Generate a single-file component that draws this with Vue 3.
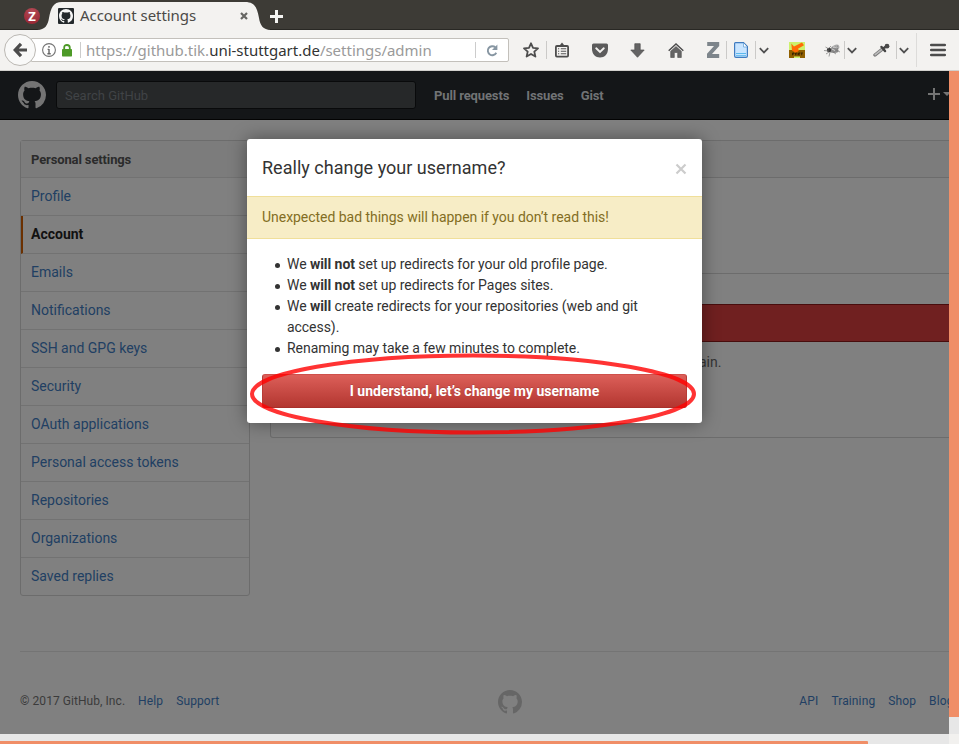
<script setup>
const mark = 'M8 0C3.58 0 0 3.58 0 8c0 3.54 2.29 6.53 5.47 7.59.4.07.55-.17.55-.38 0-.19-.01-.82-.01-1.49-2.01.37-2.53-.49-2.69-.94-.09-.23-.48-.94-.82-1.13-.28-.15-.68-.52-.01-.53.63-.01 1.08.58 1.23.82.72 1.21 1.87.87 2.33.66.07-.52.28-.87.51-1.07-1.78-.2-3.64-.89-3.64-3.95 0-.87.31-1.59.82-2.15-.08-.2-.36-1.02.08-2.12 0 0 .67-.21 2.2.82.64-.18 1.32-.27 2-.27.68 0 1.36.09 2 .27 1.53-1.04 2.2-.82 2.2-.82.44 1.1.16 1.92.08 2.12.51.56.82 1.27.82 2.15 0 3.07-1.87 3.75-3.65 3.95.29.25.54.73.54 1.48 0 1.07-.01 1.93-.01 2.2 0 .21.15.46.55.38A8.013 8.013 0 0016 8c0-4.42-3.58-8-8-8z'
const items = ['Profile', 'Account', 'Emails', 'Notifications', 'SSH and GPG keys', 'Security', 'OAuth applications', 'Personal access tokens', 'Repositories', 'Organizations', 'Saved replies']
</script>

<template>
  <div class="window">
    <div class="tabbar">
      <span class="pinned">Z</span>
      <div class="tab">
        <svg class="tab-bg" width="234" height="30" viewBox="0 0 234 30">
          <path d="M0 30C8 30 11 25 12 18C14 8 16 2 25 2H208C218 2 220 8 222 18C223 25 226 30 234 30Z" fill="#f3f2f0" />
        </svg>
        <div class="tab-content">
          <span class="favicon"><svg width="14" height="14" viewBox="0 0 16 16"><path :d="mark" fill="#f5f5f5" /></svg></span>
          <span class="tab-title">Account settings</span>
          <svg class="tab-close" width="8" height="8" viewBox="0 0 8 8"><path d="M1 1L7 7M7 1L1 7" stroke="#666663" stroke-width="2.2" /></svg>
        </div>
      </div>
      <svg class="new-tab" width="13" height="13" viewBox="0 0 13 13"><path d="M6.5 0V13M0 6.5H13" stroke="#f4f4f2" stroke-width="3" /></svg>
    </div>

    <div class="toolbar">
      <span class="back"><svg width="14" height="16" viewBox="0 0 14 16"><path d="M8 1.8L2.2 8L8 14.2M2.4 8H14" fill="none" stroke="#4c4c4c" stroke-width="3.2" /></svg></span>
      <div class="urlbar">
        <svg class="info" width="14" height="14" viewBox="0 0 14 14"><circle cx="7" cy="7" r="6.4" fill="none" stroke="#737373" stroke-width="1.1" /><path d="M7 3V4.7M7 6V11M5.6 6.4H7M5.4 10.7H8.7" stroke="#666" stroke-width="1.4" /></svg>
        <svg class="lock" width="10" height="13" viewBox="0 0 10 13"><path d="M2.2 6V3.7Q2.2 1 5 1T7.8 3.7V6" fill="none" stroke="#4d9a27" stroke-width="1.8" /><rect y="5" width="10" height="7.5" rx=".7" fill="#4d9a27" /></svg>
        <i class="url-sep"></i>
        <span class="url">https://github.tik.<b>uni-stuttgart.de</b>/settings/admin</span>
        <i class="reload-sep"></i>
        <svg class="reload" width="12" height="13" viewBox="0 0 12 13"><path d="M9.4 3.4A4.5 4.5 0 1 0 10.3 8.8" fill="none" stroke="#8796a2" stroke-width="1.9" /><path d="M11.4.6V6H6Z" fill="#8796a2" /></svg>
      </div>
      <svg class="i-star" width="16" height="16" viewBox="0 0 16 16"><path d="M8 1.3L10 5.8L15 6.3L11.3 9.6L12.4 14.6L8 12L3.6 14.6L4.7 9.6L1 6.3L6 5.8Z" fill="none" stroke="#4d4d4d" stroke-width="1.8" stroke-linejoin="round" /></svg>
      <i class="vsep s1"></i>
      <svg class="i-list" width="14" height="16" viewBox="0 0 14 16"><rect x=".9" y="4" width="12.2" height="10.6" rx="1" fill="#f3f2f0" stroke="#4d4d4d" stroke-width="1.8" /><path d="M3.5 4.5V3H5L7 .5L9 3H10.5V4.5Z" fill="#4d4d4d" /><path d="M3 6.8H4.2M5.8 6.8H11.2M3 9.3H4.2M5.8 9.3H11.2M3 11.8H4.2M5.8 11.8H11.2" stroke="#555" stroke-width="1.1" /></svg>
      <svg class="i-pocket" width="16" height="15" viewBox="0 0 16 15"><path d="M1.5 .5H14.5Q16 .5 16 2V6C16 11 12.5 14.5 8 14.5S0 11 0 6V2Q0 .5 1.5 .5Z" fill="#5c5c5c" /><path d="M4.2 5.3L8 9L11.8 5.3" fill="none" stroke="#f3f2f0" stroke-width="1.9" stroke-linecap="round" /></svg>
      <svg class="i-down" width="15" height="15" viewBox="0 0 15 15"><path d="M4.8 .7H10.2V7H14.2L7.5 14.3L.8 7H4.8Z" fill="#646464" stroke="#4d4d4d" stroke-width=".7" /></svg>
      <svg class="i-home" width="16" height="15" viewBox="0 0 16 15"><path d="M.7 7.7L8 1L15.3 7.7" fill="none" stroke="#4d4d4d" stroke-width="1.5" /><path d="M2.7 8.3L8 3.5L13.3 8.3V14.5H9.7V9.5H6.3V14.5H2.7Z" fill="#656565" stroke="#4d4d4d" stroke-width=".6" /></svg>
      <svg class="i-z" width="14" height="16" viewBox="0 0 14 16"><path d="M1.2 0H13.2V4L6 12H13.2V16H1V11.7L8 4H1.2Z" fill="#7d858b" /></svg>
      <i class="vsep s2"></i>
      <svg class="i-doc" width="14" height="16" viewBox="0 0 14 16"><path d="M1.5 .6H9.5L13.4 4.5V14Q13.4 15.4 12 15.4H2Q.6 15.4 .6 14V1.5Q.6 .6 1.5 .6Z" fill="#c9e5ff" stroke="#407cc0" stroke-width="1.2" /><path d="M9.5 1V5H13" fill="#fff" stroke="#69a7dc" stroke-width=".8" /><path d="M2 11.5H12M2 13.7H12" stroke="#5bb9ed" stroke-width="1" /></svg>
      <i class="vsep s3"></i>
      <svg class="chev c1" width="10" height="7" viewBox="0 0 10 7"><path d="M.8 1.2L5 5.4L9.2 1.2" fill="none" stroke="#505050" stroke-width="1.8" /></svg>
      <svg class="i-part" width="16" height="16" viewBox="0 0 16 16"><rect width="16" height="16" fill="#cdf16c" /><path d="M0 8H16V16H11V14.5H5V16H0Z" fill="#906000" /><path d="M2.3 1.5L5 4.5L13 .5L15 3.2L9 6.8L10 8.5L7 11L3 8.5Z" fill="#ff6b05" /><path d="M3.5 13.3V11H5V12H3.5M6.5 13.3V11H8V13.3M9.5 13.3V11H11L9.5 12L11 13.3M11.5 11H14M12.7 11V13.3" fill="none" stroke="#382300" stroke-width=".9" /></svg>
      <svg class="i-fly" width="17" height="15" viewBox="0 0 17 15"><ellipse cx="11" cy="5" rx="4.6" ry="2.8" transform="rotate(-25 11 5)" fill="#aaa" /><ellipse cx="10" cy="7.4" rx="4.5" ry="2.5" fill="#888" /><circle cx="5" cy="7" r="2.2" fill="#3c3c3c" /><path d="M5 6L1.5 4M5 8L0 7.5M5 9L2 11M6 9L5 13.5M9 9L12 11M12 7L16 9M5 5L7 3M11 3L14 6M8 5L14 3" fill="none" stroke="#777" stroke-width=".7" /><path d="M8 6L11 7.5M9 4.3L13 4" stroke="#ddd" stroke-width=".9" /></svg>
      <i class="vsep s4"></i>
      <svg class="chev c2" width="10" height="7" viewBox="0 0 10 7"><path d="M.8 1.2L5 5.4L9.2 1.2" fill="none" stroke="#505050" stroke-width="1.8" /></svg>
      <svg class="i-pick" width="17" height="15" viewBox="0 0 17 15"><path d="M2 12L9.5 6" stroke="#777" stroke-width="3.4" stroke-linecap="round" /><path d="M2.2 11.7L9.5 6" stroke="#bbb" stroke-width="1.6" stroke-linecap="round" /><path d="M8.5 4L12 8M10.5 5.3L14 3" stroke="#444" stroke-width="2.5" stroke-linecap="round" /><circle cx="14" cy="3.2" r="2.4" fill="#4a4a4a" /></svg>
      <i class="vsep s5"></i>
      <svg class="chev c3" width="10" height="7" viewBox="0 0 10 7"><path d="M.8 1.2L5 5.4L9.2 1.2" fill="none" stroke="#505050" stroke-width="1.8" /></svg>
      <i class="vsep s6"></i>
      <svg class="i-menu" width="16" height="14" viewBox="0 0 16 14"><path d="M1.2 2H14.8M1.2 7H14.8M1.2 12H14.8" stroke="#4c4c4c" stroke-width="2.6" stroke-linecap="round" /></svg>
    </div>

    <div class="viewport">
      <div class="page">
        <header>
          <svg class="logo" width="28" height="28" viewBox="0 0 16 16"><path :d="mark" fill="#747474" /></svg>
          <div class="search">Search GitHub</div>
          <nav><span>Pull requests</span><span>Issues</span><span>Gist</span></nav>
          <svg class="plus" width="23" height="12" viewBox="0 0 23 12"><path d="M6 0V12M0 6H12" stroke="#747474" stroke-width="2" /><path d="M15 4H23L19 8Z" fill="#747474" /></svg>
        </header>
        <main>
          <aside>
            <h2>Personal settings</h2>
            <a v-for="item in items" :key="item" :class="{ active: item === 'Account' }">{{ item }}</a>
          </aside>
          <section class="panels">
            <div class="panel password"><div class="panel-head"></div></div>
            <div class="panel rename"><div class="danger-head"></div><p>ain.</p></div>
          </section>
        </main>
        <footer>
          <span class="copyright">© 2017 GitHub, Inc.</span><a>Help</a><a>Support</a>
          <svg class="foot-logo" width="24" height="24" viewBox="0 0 16 16"><path :d="mark" fill="#666" /></svg>
          <a class="api">API</a><a>Training</a><a>Shop</a><a>Blog</a>
        </footer>
      </div>
      <div class="vscroll"><div></div></div>
    </div>
    <div class="hscroll"><div class="hthumb"></div><div class="corner"></div></div>

    <div class="modal">
      <div class="modal-title">
        <span>Really change your username?</span>
        <svg width="12" height="12" viewBox="0 0 12 12"><path d="M1.5 1.5L10.5 10.5M10.5 1.5L1.5 10.5" stroke="#ccc" stroke-width="2.2" /></svg>
      </div>
      <div class="flash">Unexpected bad things will happen if you don’t read this!</div>
      <div class="modal-body">
        <ul>
          <li>We <b>will not</b> set up redirects for your old profile page.</li>
          <li>We <b>will not</b> set up redirects for Pages sites.</li>
          <li>We <b>will</b> create redirects for your repositories (web and git access).</li>
          <li>Renaming may take a few minutes to complete.</li>
        </ul>
        <button>I understand, let’s change my username</button>
      </div>
    </div>
    <svg class="ring" width="450" height="84" viewBox="0 0 450 84"><ellipse cx="225" cy="42" rx="221" ry="38.5" fill="none" stroke="#f00" stroke-opacity=".8" stroke-width="4" /></svg>
  </div>
</template>

<style>
body { margin: 0; overflow: hidden; }
</style>
<style scoped>
* { box-sizing: border-box; }
svg, i { display: block; flex: none; }
.window { position: relative; width: 959px; height: 744px; overflow: hidden; font-family: Roboto, sans-serif; background: #e7e7e7; display: flex; flex-direction: column; }
.tabbar { height: 30px; flex: none; display: flex; background: #3d3b36; border-bottom: 1px solid #292824; }
.pinned { width: 16px; height: 16px; margin: 8px 0 0 24px; border-radius: 50%; background: radial-gradient(circle at 50% 20%, #b34c57, #96202e); color: #fff; font: bold 13px/16px "Open Sans", sans-serif; text-align: center; flex: none; }
.tab { position: relative; width: 234px; height: 30px; margin-left: -3px; flex: none; }
.tab-bg { position: absolute; left: 0; top: 0; }
.tab-content { position: relative; display: flex; align-items: center; height: 31px; padding-left: 21px; }
.favicon { width: 16px; height: 16px; background: #24292c; border-radius: 1px; padding: 1px; }
.tab-title { font: 15px/20px "Noto Sans", sans-serif; color: #4b4a47; margin-left: 6px; width: 118px; white-space: nowrap; letter-spacing: -.05px; margin-top: -1px; }
.tab-close { margin-left: 42px; }
.new-tab { margin: 10px 0 0 -1px; }
.toolbar { height: 41px; flex: none; display: flex; align-items: center; background: #f3f2f0; border-bottom: 1px solid #d2d0cc; }
.back { width: 32px; height: 32px; margin-left: 4px; border: 1px solid #bbb8b3; border-radius: 50%; background: #f9f9f8; display: flex; align-items: center; justify-content: center; position: relative; z-index: 1; flex: none; }
.urlbar { width: 478px; height: 24px; margin-left: -5px; background: #fff; border: 1px solid #c3c0bb; border-radius: 0 2px 2px 0; display: flex; align-items: center; flex: none; }
.info { margin-left: 10px; }
.lock { margin-left: 6px; }
.url-sep { width: 1px; height: 16px; margin-left: 8px; background: #ccc; }
.url { width: 389px; margin-left: 5px; font: 15px/20px "Noto Sans", sans-serif; color: #9a9a9a; white-space: nowrap; letter-spacing: -.01px; }
.url b { color: #333; font-weight: 400; }
.reload-sep { width: 1px; height: 16px; background: #ccc; }
.reload { margin-left: 10px; }
.i-star { margin-left: 14px; }
.vsep { width: 1px; height: 18px; background: #cbcac8; }
.s1 { margin-left: 7px; }
.i-list { margin-left: 8px; }
.i-pocket { margin-left: 23px; }
.i-down { margin-left: 22px; }
.i-home { margin-left: 23px; }
.i-z { margin-left: 22px; }
.s2 { margin-left: 6px; }
.i-doc { margin-left: 7px; }
.s3 { margin-left: 7px; }
.c1 { margin-left: 3px; }
.i-part { margin-left: 20px; }
.i-fly { margin-left: 19px; }
.s4 { margin-left: 3px; }
.c2 { margin-left: 2px; }
.i-pick { margin-left: 16px; }
.s5 { margin-left: 6px; }
.c3 { margin-left: 2px; }
.s6 { margin-left: 7px; height: 34px; background: #dddcda; }
.i-menu { margin-left: 13px; }
.viewport { height: 663px; display: flex; flex: none; }
.page { width: 949px; height: 663px; background: #808080; overflow: hidden; }
header { height: 49px; background: #141618; border-bottom: 1px solid #040404; display: flex; align-items: center; }
.logo { margin-left: 18px; }
.search { width: 360px; height: 28px; margin-left: 10px; border: 1px solid #090a0b; border-radius: 3px; background: #262829; color: #404346; font-size: 13px; line-height: 27px; padding-left: 8px; flex: none; }
nav { display: flex; gap: 17px; margin-left: 18px; color: #717375; font-size: 13px; font-weight: 700; width: 494px; white-space: nowrap; letter-spacing: -.12px; flex: none; }
.plus { margin-top: -3px; flex: none; }
main { display: flex; padding: 20px 0 0 20px; }
aside { width: 230px; height: 456px; border: 1px solid #6c6c6c; border-radius: 3px; flex: none; }
h2 { margin: 0; height: 37px; line-height: 37px; padding-left: 10px; border-bottom: 1px solid #727272; background: #7c7c7c; font-size: 13px; color: #2b2b2b; letter-spacing: -.13px; }
aside a { display: block; height: 38px; line-height: 36px; border-bottom: 1px solid #727272; padding-left: 10px; font-size: 14px; color: #213f63; }
aside a:last-child { border: 0; }
aside .active { color: #111; font-weight: 700; border-left: 2px solid #6b3000; padding-left: 8px; }
.panels { width: 700px; margin-left: 20px; flex: none; }
.panel { border: 1px solid #6c6c6c; border-radius: 3px; }
.password { height: 134px; }
.panel-head { height: 37px; background: #7c7c7c; border-bottom: 1px solid #6c6c6c; }
.rename { height: 134px; margin-top: 30px; border-top: 0; }
.danger-head { height: 38px; background: #702020; border: solid #480d0d; border-width: 1px 0; }
.rename p { margin: 10px 0 0 428px; font-size: 14px; line-height: 21px; color: #353535; }
footer { margin: 55px 0 0 20px; border-top: 1px solid #747474; height: 80px; width: 980px; display: flex; align-items: flex-start; padding-top: 40px; font-size: 12px; line-height: 18px; color: #3b3b3b; white-space: nowrap; }
footer a { color: #213f63; margin-left: 13px; letter-spacing: .12px; }
.copyright { letter-spacing: .06px; }
.foot-logo { width: 24px; margin-top: -2px; margin-left: 279px; }
footer .api { margin-left: 277px; }
.vscroll { width: 10px; background: #e7e7e7; }
.vscroll div { height: 646px; background: #f08e67; }
.hscroll { height: 10px; display: flex; align-items: flex-end; justify-content: space-between; background: #e7e7e7; flex: none; }
.hthumb { width: 868px; height: 3px; background: #f08e67; border-radius: 0 1px 0 0; }
.corner { width: 10px; height: 10px; background: #f2f1ef; }
.modal { position: absolute; left: 247px; top: 139px; width: 455px; height: 284px; background: #fff; border-radius: 3px; box-shadow: 0 0 18px rgba(0, 0, 0, .4); color: #333; }
.modal-title { height: 57px; padding: 0 15px; display: flex; align-items: center; justify-content: space-between; font-size: 18px; letter-spacing: .02px; }
.modal-title svg { margin-top: 2px; }
.flash { height: 43px; padding-left: 15px; border: solid #f0df9a; border-width: 1px 0; background: #f7edc6; color: #836d23; font-size: 14px; line-height: 41px; white-space: nowrap; letter-spacing: -.035px; }
.modal-body { padding: 15px; font-size: 14px; line-height: 21px; }
ul { margin: 0 0 15px; padding-left: 25px; list-style: none; letter-spacing: -.05px; }
li::before { content: ""; float: left; width: 5px; height: 5px; margin: 9px 0 0 -12px; border-radius: 50%; background: #333; }
button { display: block; width: 425px; height: 34px; border: 1px solid #b83b36; border-color: #cf504b #b83b36 #a8302b; border-radius: 3px; background: linear-gradient(#dc5f59, #b33630); color: #fff; font: bold 14px Roboto, sans-serif; padding: 0; text-shadow: 0 -1px 0 rgba(0, 0, 0, .15); }
.ring { position: absolute; left: 248px; top: 352px; }
</style>
